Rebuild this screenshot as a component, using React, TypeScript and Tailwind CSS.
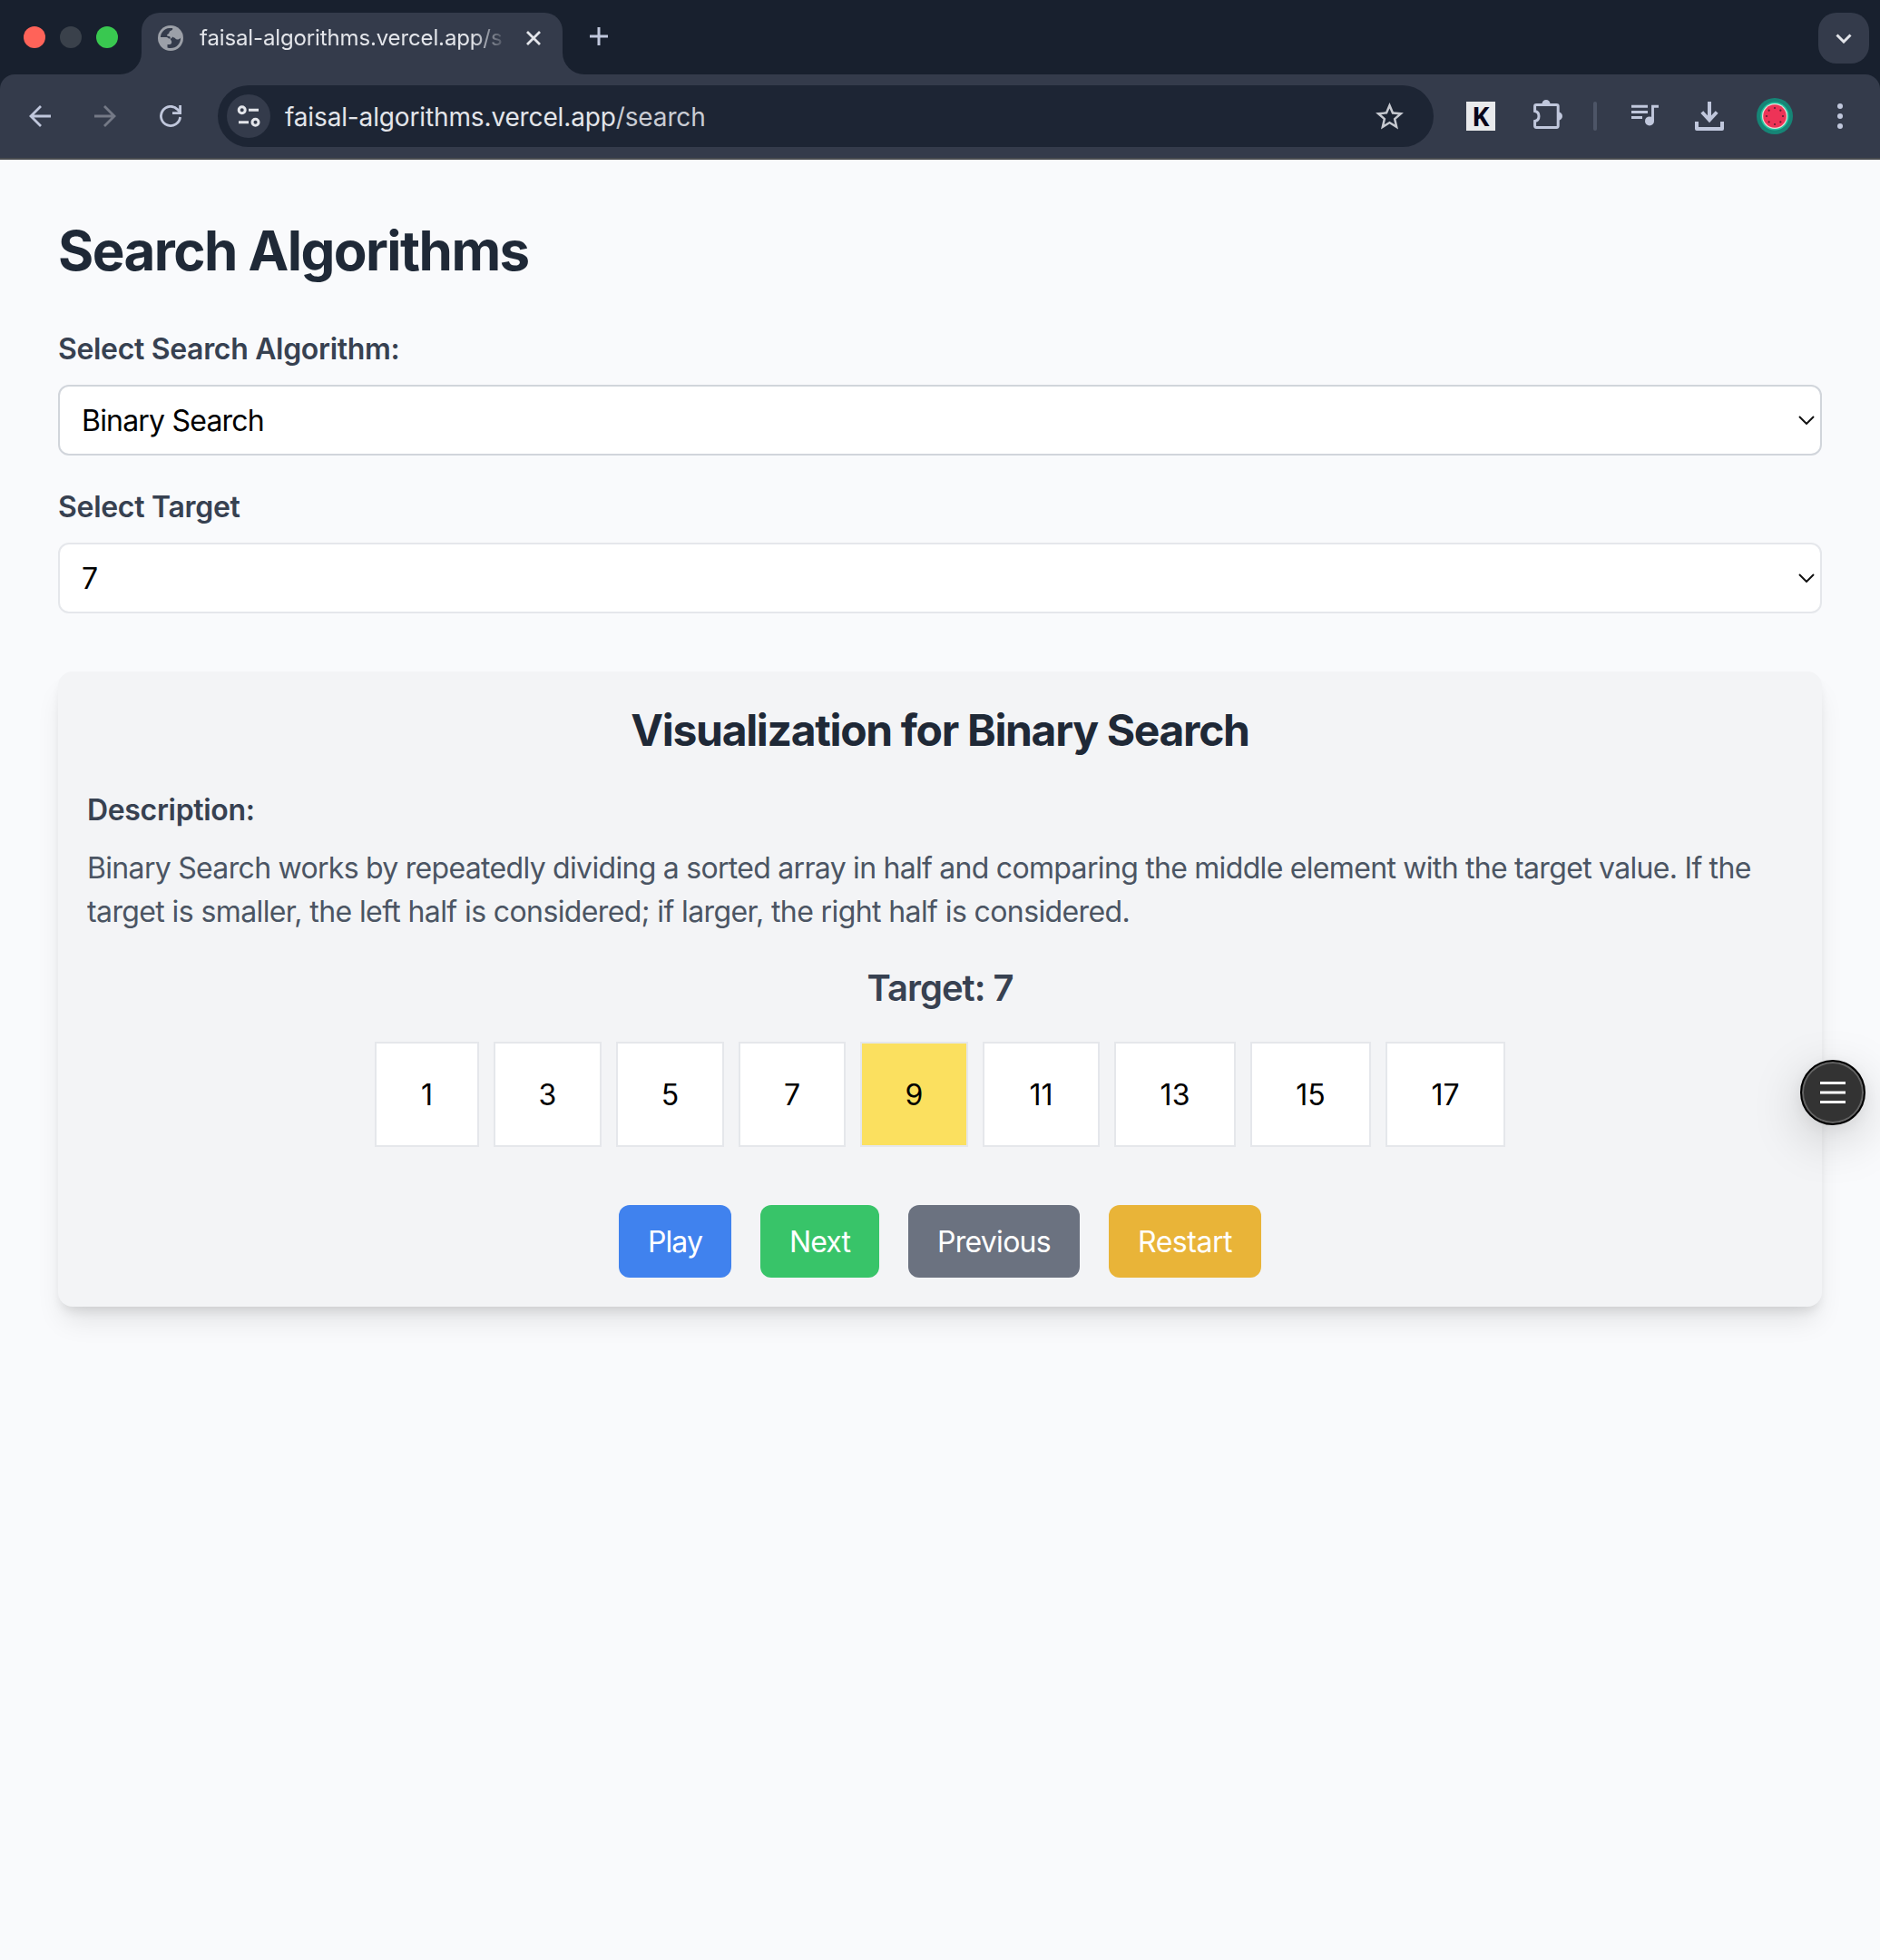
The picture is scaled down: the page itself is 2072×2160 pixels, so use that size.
import type { ReactNode } from "react";

type Cell = { value: number; width: string; active?: boolean };

const cells: Cell[] = [
  { value: 1, width: "w-[115px]" },
  { value: 3, width: "w-[119px]" },
  { value: 5, width: "w-[119px]" },
  { value: 7, width: "w-[118px]" },
  { value: 9, width: "w-[119px]", active: true },
  { value: 11, width: "w-[129px]" },
  { value: 13, width: "w-[134px]" },
  { value: 15, width: "w-[133px]" },
  { value: 17, width: "w-[132px]" },
];

const actions = [
  { label: "Play", style: "w-[124px] bg-[#4082ee] tracking-[-0.93px]" },
  { label: "Next", style: "w-[131px] bg-[#38c469] tracking-[-0.9px]" },
  { label: "Previous", style: "w-[189px] bg-[#6b7280] tracking-[-0.71px]" },
  { label: "Restart", style: "w-[168px] bg-[#e9b438] tracking-[-0.47px]" },
];

const seeds = [0, 45, 90, 135, 180, 225, 270, 315];

function GlobeIcon() {
  return (
    <svg className="h-7 w-7 shrink-0" viewBox="0 0 28 28">
      <circle cx="14" cy="14" r="14" fill="#9ca0a8" />
      <path
        fill="#343b4b"
        d="M2.9 13C3.2 7.600 7.200 3.400 12.500 2.900L16.200 3.100C16.600 5 15.300 5.700 14 6C12.300 6.500 12.800 8 12.200 8.800C11.600 9.600 10 9.600 10 11C10 12.100 12 11.600 13 12.200C14 12.800 13.700 13.800 13.700 14.600H12C11 13.400 9.800 13 8.500 13Z"
      />
      <path
        fill="#343b4b"
        d="M25.100 13.500C25.200 20 20.500 25.100 14 25.100C12.800 25.100 11.600 24.900 10.500 24.500V21H12.700C14.500 21 15.200 19.800 15.200 18.200C15.200 17 14 16.500 13.700 14.600C14.800 14.600 15.600 14 16 12.500C17 13.600 18.600 13.200 19.300 14.500C20.300 16.200 23.700 15.800 25.100 13.500Z"
      />
    </svg>
  );
}

function BrowserTabs() {
  return (
    <div className="flex h-[82px] bg-[#18202e]">
      <div className="flex w-[132px] gap-4 pt-[29px] pl-[26px]">
        <span className="h-6 w-6 rounded-full bg-[#ff6359]" />
        <span className="h-6 w-6 rounded-full bg-[#3a414b]" />
        <span className="h-6 w-6 rounded-full bg-[#39c850]" />
      </div>
      <div className="h-6 w-6 self-end bg-[#343b4b]">
        <div className="h-full w-full rounded-br-[24px] bg-[#18202e]" />
      </div>
      <div className="mt-[14px] flex h-[68px] w-[464px] items-start rounded-t-[20px] bg-[#343b4b] pt-[14px] pl-[18px]">
        <GlobeIcon />
        <span className="ml-[18px] w-[337px] text-[24px] leading-[28px] tracking-[-0.13px] whitespace-nowrap text-[#e3e5ea] [mask-image:linear-gradient(to_right,#000_89%,transparent_101%)]">
          faisal-algorithms.vercel.app/s
        </span>
        <svg className="mt-[6px] ml-[23px] h-4 w-4" viewBox="0 0 16 16" fill="none" stroke="#e3e5ea" strokeWidth="2.8">
          <path d="M1 1l14 14M15 1L1 15" />
        </svg>
      </div>
      <div className="h-6 w-6 self-end bg-[#343b4b]">
        <div className="h-full w-full rounded-bl-[24px] bg-[#18202e]" />
      </div>
      <svg className="mt-[30px] ml-[6px] h-5 w-5" viewBox="0 0 20 20" fill="none" stroke="#c0c7dc" strokeWidth="3">
        <path d="M10 0v20M0 10h20" />
      </svg>
      <div className="mt-[14px] mr-3 ml-auto flex h-14 w-14 items-center justify-center rounded-[20px] bg-[#343b4b]">
        <svg className="h-[11px] w-[18px]" viewBox="0 0 18 11" fill="none" stroke="#e3e5ea" strokeWidth="3">
          <path d="M1.500 1.500L9 9L16.500 1.500" />
        </svg>
      </div>
    </div>
  );
}

function BrowserToolbar() {
  return (
    <div className="bg-[#18202e]">
      <div className="flex h-[94px] items-center rounded-t-[16px] border-b-2 border-[#484b4f] bg-[#343b4b] pl-8">
        <svg className="h-6 w-6" viewBox="0 0 24 24" fill="none" stroke="#c0c7dc" strokeWidth="2.8">
          <path d="M24 12H2M13 1L2 12L13 23" />
        </svg>
        <svg className="ml-12 h-6 w-6" viewBox="0 0 24 24" fill="none" stroke="#747986" strokeWidth="2.8">
          <path d="M0 12H22M11 1L22 12L11 23" />
        </svg>
        <svg className="ml-12 h-6 w-6" viewBox="0 0 24 24" fill="none" stroke="#c0c7dc" strokeWidth="2.8">
          <path d="M22.600 13A10.600 10.600 0 1 1 19.800 4.700L22 7.500" />
          <path d="M22.600 0V8.600H14" />
        </svg>

        <div className="ml-10 flex h-[68px] w-[1340px] items-center rounded-full bg-[#1d2534] pl-[10px]">
          <div className="h-12 w-12 rounded-full bg-[#343b4b]">
            <svg className="h-12 w-12" viewBox="0 0 48 48" fill="none" stroke="#e3e5ea" strokeWidth="3">
              <circle cx="16.700" cy="17.300" r="3.500" />
              <path d="M24 17.300H35M13 30.700H24" />
              <circle cx="31.500" cy="30.700" r="3.500" />
            </svg>
          </div>
          <span className="ml-4 pt-px text-[28px] tracking-[-0.14px] text-[#e3e5ea]">
            faisal-algorithms.vercel.app<span className="text-[#c9ccd3]">/search</span>
          </span>
          <svg className="mr-[30px] ml-auto h-[37px] w-[37px]" viewBox="0 0 24 24" fill="#c6c9d0">
            <path d="M22 9.240l-7.190-.620L12 2 9.190 8.630 2 9.240l5.460 4.730L5.820 21 12 17.270 18.180 21l-1.630-7.030L22 9.240zM12 15.400l-3.760 2.270 1-4.280-3.320-2.880 4.380-.380L12 6.100l1.710 4.040 4.380.380-3.320 2.880 1 4.280L12 15.400z" />
          </svg>
        </div>

        <div className="ml-9 flex h-8 w-8 items-center justify-center bg-[#e9eaec]">
          <span className="font-['Open_Sans',sans-serif] text-[29px] leading-8 font-bold text-[#09061a]">K</span>
        </div>
        <svg className="mt-[-4px] ml-[42px] h-8 w-8" viewBox="0 0 32 32" fill="none" stroke="#c0c7dc" strokeWidth="3">
          <path d="M1.600 12.500V7q0-1.600 1.600-1.600H25.600q1.600 0 1.600 1.600V28.800q0 1.600-1.600 1.600H3.200q-1.600 0-1.600-1.600V23.500C4.500 23 6 20.500 6 18S4.500 13 1.600 12.500Z" />
          <path fill="#c0c7dc" stroke="none" d="M9.500 4.500a4.500 4.500 0 0 1 9 0ZM27.500 13.500a4.500 4.500 0 0 1 0 9Z" />
        </svg>
        <span className="ml-[34px] h-8 w-1 rounded-full bg-[#4d5567]" />
        <svg className="mt-[-2px] ml-[38px] h-6 w-[30px]" viewBox="0 0 30 24" fill="none" stroke="#c0c7dc" strokeWidth="2.900">
          <path d="M0 2.200H18M0 8.500H18M0 14.500H12M23.500 18V2.200H30" />
          <circle cx="20" cy="18.400" r="5" fill="#c0c7dc" stroke="none" />
        </svg>
        <svg className="ml-10 h-8 w-8" viewBox="0 0 32 32" fill="none" stroke="#c0c7dc" strokeWidth="4">
          <path d="M16 0V20M7.800 11.500L16 20.300L24.200 11.500" />
          <path d="M2 22V30H30V22" strokeLinejoin="round" />
        </svg>
        <svg className="ml-9 h-10 w-10" viewBox="0 0 40 40">
          <circle cx="20" cy="20" r="20" fill="#168576" />
          <circle cx="20" cy="20" r="15.600" fill="#20c4a0" />
          <circle cx="20" cy="20" r="14" fill="#e8dcd6" />
          <circle cx="20" cy="20" r="12.800" fill="#ee3357" />
          {seeds.map((angle) => (
            <circle key={angle} cx="20" cy="11" r="1.100" fill="#5c1f33" transform={`rotate(${angle} 20 20)`} />
          ))}
        </svg>
        <svg className="ml-[49px] h-7 w-[6px]" viewBox="0 0 6 28" fill="#c0c7dc">
          <circle cx="3" cy="3" r="3" />
          <circle cx="3" cy="14" r="3" />
          <circle cx="3" cy="25" r="3" />
        </svg>
      </div>
    </div>
  );
}

function SelectField({ label, value, border, labelStyle }: { label: ReactNode; value: string; border: string; labelStyle: string }) {
  return (
    <div className="flex flex-col gap-[15px]">
      <label className={`pt-px text-[32px] leading-[48px] font-semibold text-[#374151] ${labelStyle}`}>{label}</label>
      <button
        type="button"
        className={`flex h-[78px] w-full items-center justify-between rounded-[12px] border-2 bg-white pr-[6px] pl-6 text-[32px] tracking-[-0.8px] text-black ${border}`}
      >
        <span className="pt-[2px]">{value}</span>
        <svg className="h-[10px] w-[18px]" viewBox="0 0 18 10" fill="none" stroke="#111" strokeWidth="2">
          <path d="M1 1L9 9L17 1" />
        </svg>
      </button>
    </div>
  );
}

export default function App() {
  return (
    <div className="relative min-h-[2160px] w-[2072px] bg-[#f9fafc] font-[Inter,sans-serif]">
      <BrowserTabs />
      <BrowserToolbar />

      <main className="p-16">
        <h1 className="mb-12 text-[60px] leading-[72px] font-bold tracking-[-1.55px] text-[#1f2937]">
          Search Algorithms
        </h1>

        <div className="flex flex-col gap-8">
          <SelectField
            label="Select Search Algorithm:"
            value="Binary Search"
            border="border-[#d1d5db]"
            labelStyle="tracking-[-0.33px]"
          />
          <SelectField label="Select Target" value="7" border="border-[#e5e7eb]" labelStyle="tracking-[-0.3px]" />
        </div>

        <section className="mt-16 rounded-[16px] bg-[#f3f4f6] p-8 shadow-[0_20px_30px_-6px_rgba(0,0,0,0.1),0_8px_12px_-4px_rgba(0,0,0,0.1)]">
          <h2 className="mb-[31px] pt-px text-center text-[48px] leading-[64px] font-bold tracking-[-1.33px] text-[#1f2937]">
            Visualization for Binary Search
          </h2>
          <h3 className="mb-[15px] pt-px text-[32px] leading-[48px] font-semibold tracking-[-0.33px] text-[#374151]">
            Description:
          </h3>
          <p className="mb-[31px] pt-px text-[32px] leading-[48px] whitespace-nowrap text-[#4b5563]">
            <span className="block tracking-[-0.66px] [word-spacing:-0.3px]">
              Binary Search works by repeatedly dividing a sorted array in half and comparing the middle element with
              the target value. If the
            </span>
            <span className="block tracking-[-0.605px]">
              target is smaller, the left half is considered; if larger, the right half is considered.
            </span>
          </p>
          <p className="mb-[31px] pt-px text-center text-[40px] leading-[56px] font-semibold tracking-[-1px] text-[#374151]">
            Target: 7
          </p>

          <div className="mb-16 flex justify-center gap-4">
            {cells.map((cell) => (
              <div
                key={cell.value}
                className={`flex h-[116px] shrink-0 items-center justify-center border-2 border-[#e5e7eb] pt-[2px] text-[32px] text-black ${cell.width} ${cell.active ? "bg-[#fbe05f]" : "bg-white"}`}
              >
                {cell.value}
              </div>
            ))}
          </div>

          <div className="flex justify-center gap-8">
            {actions.map((action) => (
              <button
                key={action.label}
                type="button"
                className={`h-20 rounded-[12px] pt-[2px] text-center text-[32px] text-white ${action.style}`}
              >
                {action.label}
              </button>
            ))}
          </div>
        </section>
      </main>

      <button
        type="button"
        className="absolute top-[1168px] right-4 flex h-[72px] w-[72px] items-center justify-center rounded-full border-2 border-black bg-[#333] shadow-[inset_0_0_0_2px_#636363,0_16px_56px_rgba(0,0,0,0.18),0_4px_16px_rgba(0,0,0,0.06)]"
      >
        <svg className="h-6 w-7" viewBox="0 0 28 24" fill="none" stroke="#fff" strokeWidth="3">
          <path d="M0 1.500H28M0 12H28M0 22.500H28" />
        </svg>
      </button>
    </div>
  );
}
